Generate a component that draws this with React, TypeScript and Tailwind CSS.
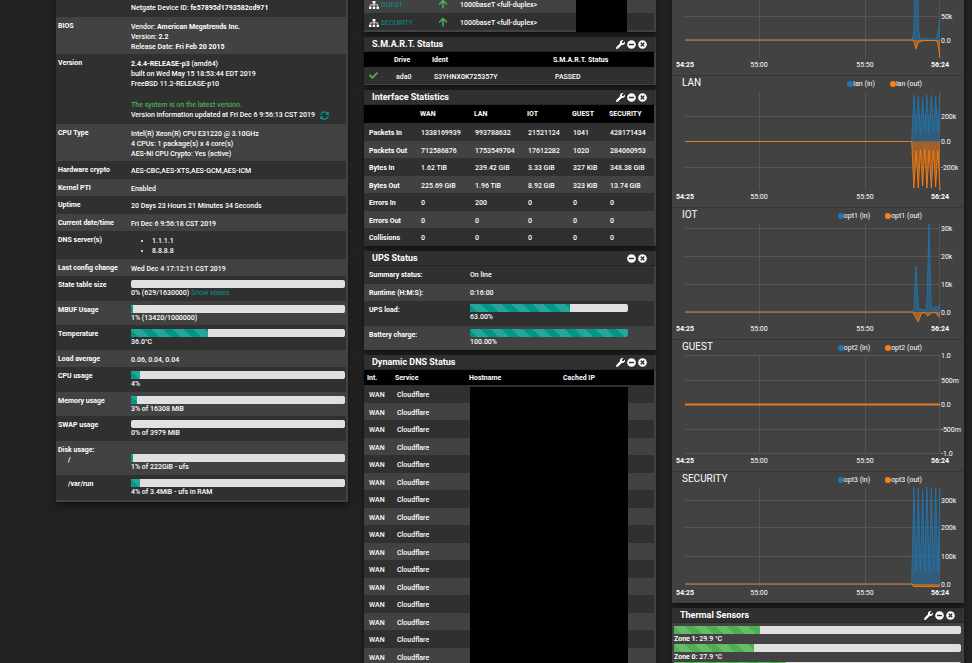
import type { ReactNode } from 'react';
import {
  FaArrowUp,
  FaCheck,
  FaMinusCircle,
  FaSitemap,
  FaSyncAlt,
  FaTimesCircle,
  FaWrench,
} from 'react-icons/fa';

const STRIPES =
  'bg-[linear-gradient(45deg,rgba(255,255,255,.15)_25%,transparent_25%,transparent_50%,rgba(255,255,255,.15)_50%,rgba(255,255,255,.15)_75%,transparent_75%)] bg-[length:21px_21px]';

const ROW = 'odd:h-[18px] odd:bg-[#303030] even:h-[17px] even:bg-[#424242]';
const BAR_ROW = 'odd:h-[25px] odd:bg-[#303030] even:h-[24px] even:bg-[#424242]';

function Bar({ label, value, color = 'bg-[#009688]' }: { label: string; value: number; color?: string }) {
  return (
    <div
      role="progressbar"
      aria-label={label}
      aria-valuenow={value}
      className="h-2 overflow-hidden rounded-xs bg-[#e0e0e0]"
    >
      <div className={`h-full ${color} ${STRIPES}`} style={{ width: `${value}%` }} />
    </div>
  );
}

function Panel({ title, wrench = true, children }: { title: string; wrench?: boolean; children: ReactNode }) {
  return (
    <section className="bg-[#424242] shadow-md shadow-black/40">
      <header className="flex h-[15px] items-center justify-between border-r border-b border-r-[#3a3a3a] border-b-[#262626] bg-[#303030] pr-2 pl-2">
        <h2 className="text-[9px] leading-[14px] font-bold">{title}</h2>
        <div className="flex items-center gap-[2px]">
          {wrench && (
            <button type="button" aria-label={`${title} settings`}>
              <FaWrench className="size-[9px]" />
            </button>
          )}
          <button type="button" aria-label={`Collapse ${title}`}>
            <FaMinusCircle className="size-[9px]" />
          </button>
          <button type="button" aria-label={`Close ${title}`}>
            <FaTimesCircle className="size-[9px]" />
          </button>
        </div>
      </header>
      {children}
    </section>
  );
}

function InfoRow({
  label,
  bar = false,
  height = '',
  children,
}: {
  label: ReactNode;
  bar?: boolean;
  height?: string;
  children: ReactNode;
}) {
  return (
    <tr className={height ? `${height} odd:bg-[#303030] even:bg-[#424242]` : bar ? BAR_ROW : ROW}>
      <th scope="row" className="w-[75px] pt-1 pl-[2px] text-left align-top font-bold">
        {label}
      </th>
      <td className={`pr-px align-top ${bar ? 'pt-1' : 'pt-[5px]'}`}>{children}</td>
    </tr>
  );
}

function SystemInformation() {
  return (
    <section className="-mt-4 self-start bg-[#424242] pr-[2px] pb-[2px] shadow-md shadow-black/40">
      <table className="w-full table-fixed">
        <tbody>
          <InfoRow label="" height="h-[33px]">
            <div className="pt-1">
              Serial: <b>1234567890</b>
            </div>
            <div>
              Netgate Device ID: <b>fe57895d1793582cd971</b>
            </div>
          </InfoRow>
          <InfoRow label="BIOS" height="h-[37px]">
            <div>
              Vendor: <b>American Megatrends Inc.</b>
            </div>
            <div>
              Version: <b>2.2</b>
            </div>
            <div>
              Release Date: <b>Fri Feb 20 2015</b>
            </div>
          </InfoRow>
          <InfoRow label="Version" height="h-[70px]">
            <div>
              <b>2.4.4-RELEASE-p3</b> (amd64)
            </div>
            <div>built on Wed May 15 18:53:44 EDT 2019</div>
            <div>FreeBSD 11.2-RELEASE-p10</div>
            <div className="mt-[11px] text-[#4caf50]">The system is on the latest version.</div>
            <div className="flex items-center gap-[5px]">
              <span>Version information updated at Fri Dec 6 9:56:13 CST 2019</span>
              <button type="button" aria-label="Refresh" className="text-[#009688]">
                <FaSyncAlt className="size-[9px]" />
              </button>
            </div>
          </InfoRow>
          <InfoRow label="CPU Type" height="h-[37px]">
            <div>Intel(R) Xeon(R) CPU E31220 @ 3.10GHz</div>
            <div>4 CPUs: 1 package(s) x 4 core(s)</div>
            <div>AES-NI CPU Crypto: Yes (active)</div>
          </InfoRow>
          <InfoRow label="Hardware crypto">AES-CBC,AES-XTS,AES-GCM,AES-ICM</InfoRow>
          <InfoRow label="Kernel PTI">Enabled</InfoRow>
          <InfoRow label="Uptime">20 Days 23 Hours 21 Minutes 34 Seconds</InfoRow>
          <InfoRow label="Current date/time">Fri Dec 6 9:56:18 CST 2019</InfoRow>
          <InfoRow label="DNS server(s)" height="h-[28px]">
            <ul className="list-disc pl-[21px]">
              <li>1.1.1.1</li>
              <li>8.8.8.8</li>
            </ul>
          </InfoRow>
          <InfoRow label="Last config change">Wed Dec 4 17:12:11 CST 2019</InfoRow>
          <InfoRow label="State table size" bar>
            <Bar label="State table size" value={0} />
            0% (629/1630000){' '}
            <a href="#states" className="font-normal text-[#009688]">
              Show states
            </a>
          </InfoRow>
          <InfoRow label="MBUF Usage" bar>
            <Bar label="MBUF Usage" value={1} />
            1% (13420/1000000)
          </InfoRow>
          <InfoRow label="Temperature" bar>
            <Bar label="Temperature" value={36} />
            36.0°C
          </InfoRow>
          <InfoRow label="Load average">0.06, 0.04, 0.04</InfoRow>
          <InfoRow label="CPU usage" bar>
            <Bar label="CPU usage" value={4} />
            4%
          </InfoRow>
          <InfoRow label="Memory usage" bar>
            <Bar label="Memory usage" value={3} />
            3% of 16308 MiB
          </InfoRow>
          <InfoRow label="SWAP usage" bar>
            <Bar label="SWAP usage" value={0} />
            0% of 3979 MiB
          </InfoRow>
          <InfoRow
            label={
              <>
                Disk usage:
                <div className="pl-[10px]">/</div>
              </>
            }
            height="h-[34px]"
          >
            <div className="pt-2">
              <Bar label="Disk usage /" value={1} />
              1% of 222GiB - ufs
            </div>
          </InfoRow>
          <InfoRow label={<div className="pl-[10px]">/var/run</div>} bar>
            <Bar label="Disk usage /var/run" value={4} />
            4% of 3.4MiB - ufs in RAM
          </InfoRow>
        </tbody>
      </table>
    </section>
  );
}

function Interfaces() {
  return (
    <section className="relative bg-[#424242] pr-[2px] pb-[2px] shadow-md shadow-black/40">
      <table className="w-full table-fixed">
        <tbody>
          {['GUEST', 'SECURITY'].map((name) => (
            <tr key={name} className="odd:h-[18px] odd:bg-[#424242] even:h-[17px] even:bg-[#303030]">
              <td className="w-[68px] pt-[2px] pl-[5px]">
                <a href={`#${name.toLowerCase()}`} className="flex items-center gap-[2px] font-normal text-[#009688]">
                  <FaSitemap className="size-[10px] text-white" />
                  {name}
                </a>
              </td>
              <td className="w-[28px] pl-[6px] text-[#4caf50]">
                <FaArrowUp className="size-[10px]" aria-label="up" />
              </td>
              <td className="pt-[2px]">1000baseT &lt;full-duplex&gt;</td>
            </tr>
          ))}
        </tbody>
      </table>
      <div className="absolute inset-y-0 left-[212px] w-[51px] bg-black" />
    </section>
  );
}

function SmartStatus() {
  return (
    <Panel title="S.M.A.R.T. Status">
      <div className="pr-[2px] pb-px">
        <table className="w-full table-fixed text-left">
          <thead className="bg-black font-bold">
            <tr className="h-[15px]">
              <th className="w-[27px]" aria-label="State" />
              <th className="w-[38px] pl-[3px]">Drive</th>
              <th className="w-[121px] pl-[3px]">Ident</th>
              <th className="pl-[3px]">S.M.A.R.T. Status</th>
            </tr>
          </thead>
          <tbody>
            <tr className="h-[17px] bg-[#303030]">
              <td className="pl-[5px] text-[#4caf50]">
                <FaCheck className="size-[9px]" aria-label="passed" />
              </td>
              <td className="pt-[2px] pl-[5px]">ada0</td>
              <td className="pt-[2px] pl-[5px]">S3YHNX0K725357Y</td>
              <td className="pt-[2px] pl-[5px]">PASSED</td>
            </tr>
          </tbody>
        </table>
      </div>
    </Panel>
  );
}

const stats = [
  ['Packets In', '1338169939', '993788632', '21521124', '1041', '428171434'],
  ['Packets Out', '712586876', '1753549704', '17612282', '1020', '284060953'],
  ['Bytes In', '1.62 TiB', '239.42 GiB', '3.33 GiB', '327 KiB', '348.38 GiB'],
  ['Bytes Out', '225.69 GiB', '1.96 TiB', '8.92 GiB', '323 KiB', '13.74 GiB'],
  ['Errors In', '0', '200', '0', '0', '0'],
  ['Errors Out', '0', '0', '0', '0', '0'],
  ['Collisions', '0', '0', '0', '0', '0'],
];

function InterfaceStatistics() {
  return (
    <Panel title="Interface Statistics">
      <div className="pr-[2px]">
        <table className="w-full table-fixed text-left">
          <thead className="bg-black font-bold">
            <tr className="h-[18px]">
              <th className="w-[53px]" aria-label="Counter" />
              <th className="w-[54px] pl-[3px]">WAN</th>
              <th className="w-[53px] pl-[3px]">LAN</th>
              <th className="w-[45px] pl-[3px]">IOT</th>
              <th className="w-[37px] pl-[3px]">GUEST</th>
              <th className="pl-[3px]">SECURITY</th>
            </tr>
          </thead>
          <tbody>
            {stats.map(([label, ...cells]) => (
              <tr key={label} className={ROW}>
                <th scope="row" className="pt-[2px] pl-[5px] font-bold">
                  {label}
                </th>
                {cells.map((cell, i) => (
                  <td key={i} className="pt-[2px] pl-1">
                    {cell}
                  </td>
                ))}
              </tr>
            ))}
          </tbody>
        </table>
      </div>
    </Panel>
  );
}

function UpsStatus() {
  return (
    <Panel title="UPS Status" wrench={false}>
      <div className="pr-[2px]">
        <table className="w-full table-fixed text-left">
          <tbody className="align-top">
            <tr className={ROW}>
              <th scope="row" className="w-[106px] pt-1 pl-[5px] font-bold">
                Summary status:
              </th>
              <td className="pt-1">On line</td>
            </tr>
            <tr className={ROW}>
              <th scope="row" className="pt-1 pl-[5px] font-bold">
                Runtime (H:M:S):
              </th>
              <td className="pt-1">0:16:00</td>
            </tr>
            <tr className={BAR_ROW}>
              <th scope="row" className="pt-1 pl-[5px] font-bold">
                UPS load:
              </th>
              <td className="pt-[3px] pr-[26px]">
                <Bar label="UPS load" value={63} />
                63.00%
              </td>
            </tr>
            <tr className={BAR_ROW}>
              <th scope="row" className="pt-1 pl-[5px] font-bold">
                Battery charge:
              </th>
              <td className="pt-[3px] pr-[26px]">
                <Bar label="Battery charge" value={100} />
                100.00%
              </td>
            </tr>
          </tbody>
        </table>
      </div>
    </Panel>
  );
}

function DynamicDns() {
  return (
    <Panel title="Dynamic DNS Status">
      <div className="relative pr-[2px]">
        <table className="w-full table-fixed text-left">
          <thead className="bg-black font-bold">
            <tr className="h-[15px]">
              <th className="w-[28px] pl-[3px]">Int.</th>
              <th className="w-[74px] pl-[3px]">Service</th>
              <th className="w-[94px] pl-[3px]">Hostname</th>
              <th className="pl-[3px]">Cached IP</th>
            </tr>
          </thead>
          <tbody>
            {Array.from({ length: 16 }, (_, i) => (
              <tr key={i} className={ROW}>
                <td className="pt-[2px] pl-[5px]">WAN</td>
                <td className="pt-[2px] pl-[5px]">Cloudflare</td>
                <td />
                <td />
              </tr>
            ))}
          </tbody>
        </table>
        <div className="absolute top-[17px] bottom-0 left-[106px] w-[158px] bg-black" />
      </div>
    </Panel>
  );
}

type Series = [number, number][];

type Chart = {
  name: string;
  id: string;
  zero: number;
  ticks: [string, number][];
  input: Series;
  output: Series;
};

// one sample every couple of pixels, swinging between peak and valley
function zigzag(zero: number, peaks: number[], valleys: number[]): Series {
  const points: Series = [[13, zero], [239.7, zero]];
  peaks.forEach((peak, i) => {
    points.push([241.9 + i * 4.35, peak]);
    if (i < valleys.length) points.push([244.1 + i * 4.35, valleys[i]]);
  });
  return points;
}

const charts: Chart[] = [
  {
    name: 'WAN',
    id: 'wan',
    zero: 80,
    ticks: [['50k', 56], ['0.0', 80]],
    input: [[13, 80], [240.5, 80], [242, 70], [243, 0], [245.5, 0], [246.5, 70], [248, 79], [264.5, 79], [268, 60]],
    output: [[13, 80], [240.5, 80], [242, 82], [244, 89], [246.5, 82], [252, 80.5], [264.5, 80.5], [266, 84], [268, 98]],
  },
  {
    name: 'LAN',
    id: 'lan',
    zero: 49.5,
    ticks: [['200k', 24], ['0.0', 49], ['-200k', 75]],
    input: zigzag(49.5, [3, 4, 5, 3, 3, 4, 0], [39, 41, 37, 41, 39, 40]),
    output: zigzag(49.5, [96, 96, 94, 96, 96, 95, 98], [59, 58, 57, 58, 58, 59]),
  },
  {
    name: 'IOT',
    id: 'opt1',
    zero: 88,
    ticks: [['30k', 4], ['20k', 32], ['10k', 60], ['0.0', 88]],
    input: [[13, 88], [241, 88], [242, 85], [244, 42], [246.5, 85], [250, 85.5], [254, 86.5], [255, 80], [257, 0], [259, 80], [261, 86], [263.5, 82], [265.5, 84], [268, 80]],
    output: [[13, 88], [241, 88], [244, 94], [246.3, 98], [249, 90], [252, 88.5], [253.5, 89], [255.5, 92], [259.5, 89], [262, 88.5], [264, 89], [266, 92], [268, 92]],
  },
  {
    name: 'GUEST',
    id: 'opt2',
    zero: 48.5,
    ticks: [['1.0', -1], ['500m', 24], ['0.0', 48], ['-500m', 73], ['-1.0', 97]],
    input: [[13, 48.5], [268, 48.5]],
    output: [[13, 48.5], [268, 48.5]],
  },
  {
    name: 'SECURITY',
    id: 'opt3',
    zero: 96,
    ticks: [['300k', 12], ['200k', 39], ['100k', 68], ['0.0', 96]],
    input: zigzag(96, [-1, 0, 2, -1, -1, 0, 0], [83, 83, 82, 83, 82, 83]),
    output: [[13, 96], [239.7, 96], [241.5, 98.5], [268, 98.5]],
  },
];

const times: [string, number][] = [['54:25', 13], ['55:00', 87], ['55:50', 193], ['56:24', 268]];

function Area({ points, zero, color, width }: { points: Series; zero: number; color: string; width: number }) {
  const line = points.map(([x, y]) => `${x},${y}`).join(' ');
  return (
    <>
      <polygon points={`${line} 268,${zero}`} fill={color} fillOpacity={0.5} />
      <polyline points={line} fill="none" stroke={color} strokeWidth={width} strokeOpacity={0.85} />
    </>
  );
}

function TrafficChart({ chart }: { chart: Chart }) {
  const flat = chart.id === 'opt2';
  return (
    <div className="border-t border-[#363636]">
      <div className="flex h-4 items-start justify-between pr-[42px] pl-[10px]">
        <h3 className="text-[10px] leading-[14px] font-normal">{chart.name}</h3>
        <div className="flex gap-[15px] pt-[3px] font-normal">
          <span className="flex items-center">
            <i className="size-[6px] rounded-full bg-[#1f77b4]" />
            {chart.id} (in)
          </span>
          <span className="flex items-center">
            <i className="size-[6px] rounded-full bg-[#ff7f0e]" />
            {chart.id} (out)
          </span>
        </div>
      </div>
      <svg
        viewBox="0 0 292 115"
        className="block w-full overflow-visible"
        role="img"
        aria-label={`${chart.name} traffic`}
      >
        <g stroke="#555" strokeWidth="1">
          {chart.ticks.map(([label, y]) => (
            <line key={label} x1="13" x2="268" y1={y + 0.5} y2={y + 0.5} />
          ))}
          <path d="M87.500 0V98M193.500 0V98M267.500 0V98" />
        </g>
        <Area points={chart.input} zero={chart.zero} color="#1f77b4" width={1} />
        <Area points={chart.output} zero={chart.zero} color="#ff7f0e" width={flat ? 2 : 1} />
        <g fill="#fff" fontSize="7">
          {chart.ticks.map(([label, y]) => (
            <text key={label} x="269" y={y + 3} fontWeight="400">
              {label}
            </text>
          ))}
          {times.map(([label, x], i) => (
            <text key={label} x={x} y="107" textAnchor="middle" fontWeight={i % 3 === 0 ? 700 : 400}>
              {label}
            </text>
          ))}
        </g>
      </svg>
    </div>
  );
}

const zones: [string, string, number][] = [
  ['Zone 1:', '29.9 °C', 30],
  ['Zone 0:', '27.9 °C', 28],
  ['Core 3:', '39.0 °C', 39],
];

function ThermalSensors() {
  return (
    <Panel title="Thermal Sensors">
      <div className="pt-[3px] pr-[3px] pl-[2px]">
        {zones.map(([name, value, percent]) => (
          <div key={name}>
            <Bar label={name} value={percent} color="bg-[#4caf50]" />
            <b>{name}</b> {value}
          </div>
        ))}
      </div>
    </Panel>
  );
}

export default function App() {
  return (
    <main className="grid h-screen grid-cols-3 gap-4 overflow-hidden bg-[#212121] pr-2 pl-14 font-[Roboto,sans-serif] text-[7px] leading-[10px] font-medium text-white">
      <SystemInformation />
      <div className="-mt-[5px] flex flex-col gap-[5px]">
        <Interfaces />
        <SmartStatus />
        <InterfaceStatistics />
        <UpsStatus />
        <DynamicDns />
      </div>
      <div className="-mt-[57px] flex flex-col gap-[5px]">
        <section className="bg-[#424242] shadow-md shadow-black/40">
          {charts.map((chart) => (
            <TrafficChart key={chart.id} chart={chart} />
          ))}
        </section>
        <ThermalSensors />
      </div>
    </main>
  );
}
